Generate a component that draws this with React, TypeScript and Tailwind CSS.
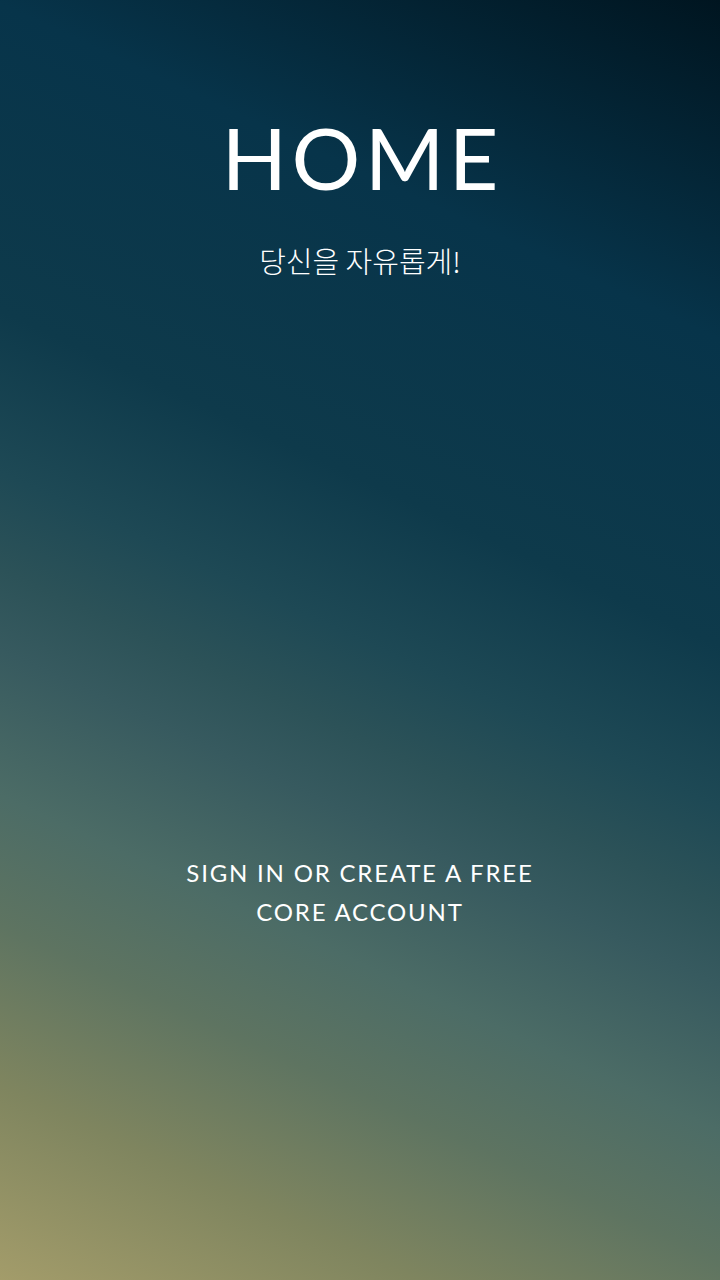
export default function App() {
  return (
    <div className="relative flex h-[1280px] w-[720px] flex-col items-center overflow-hidden bg-[linear-gradient(205deg,#001520_0%,#07344a_21%,#0e3a4b_40%,#1e4955_50%,#2c5258_56%,#375a5f_61%,#4c6c66_70%,#5e7461_78%,#7f855f_88%,#a39c6a_100%)] font-['Lato',sans-serif] text-white">
      <h1 className="mt-[114px] pl-[0.05em] text-[86px] font-normal leading-none tracking-[0.05em]">
        HOME
      </h1>
      <p className="mt-[46px] font-['Noto_Sans_CJK_KR','Noto_Sans',sans-serif] text-[29px] font-light leading-none">
        당신을 자유롭게!
      </p>
      <div className="mt-[578px] max-w-[400px] text-center text-[24px] leading-[39px] tracking-[0.075em]">
        SIGN IN OR CREATE A FREE
        <br />
        CORE ACCOUNT
      </div>
    </div>
  );
}
